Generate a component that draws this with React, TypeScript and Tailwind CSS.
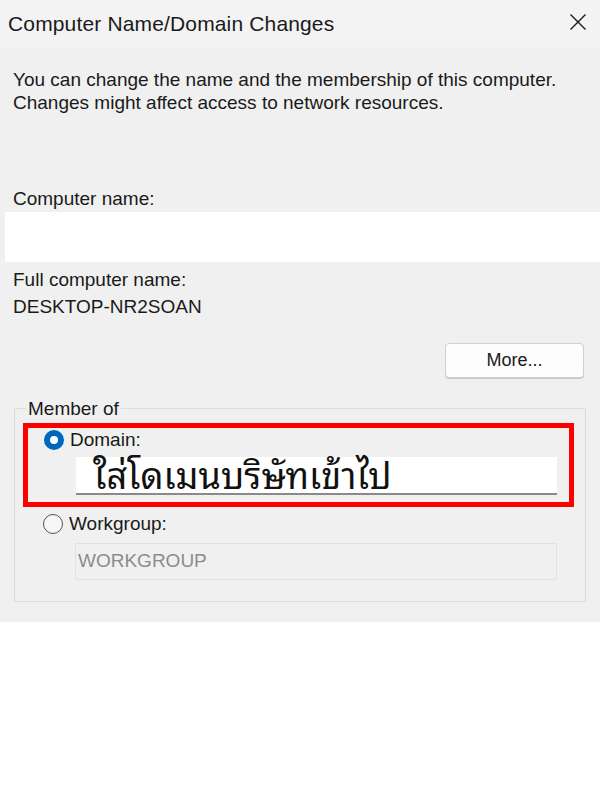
import React from "react";

export default function App() {
  const font = { fontFamily: '"Segoe UI", "Liberation Sans", Arial, sans-serif' };
  const thai = { fontFamily: '"Noto Sans Thai Looped", "Loma", "Garuda", "Tahoma", "Noto Sans Thai", "Noto Sans", sans-serif' };
  return (
    <div className="w-[600px] h-[800px] bg-white text-[#1a1a1a]" style={font}>
      <div className="bg-[#f0f0f0] h-[622px] flex flex-col">
        <div className="h-[48px] bg-[#f3f3f3] flex items-center justify-between pl-[8px] pr-[13px]">
          <span className="text-[21px] text-[#1a1a1a] tracking-[0.15px]">Computer Name/Domain Changes</span>
          <svg width="18" height="18" viewBox="0 0 18 18" className="mt-[-4px]">
            <path d="M1.5 1.5 L16.5 16.5 M16.5 1.5 L1.5 16.5" stroke="#1a1a1a" strokeWidth="1.4" fill="none" />
          </svg>
        </div>
        <div className="pl-[13px] pt-[20px] text-[19px] leading-[23px]">
          <p>You can change the name and the membership of this computer.</p>
          <p>Changes might affect access to network resources.</p>
        </div>
        <div className="pl-[13px] mt-[73px] text-[19px] leading-[23px]">Computer name:</div>
        <div className="ml-[5px] mt-[2px] h-[50px] bg-white"></div>
        <div className="pl-[13px] mt-[6px] text-[19px] leading-[23px]">Full computer name:</div>
        <div className="pl-[13px] mt-[4px] text-[19px] leading-[23px]">DESKTOP-NR2SOAN</div>
        <div className="flex justify-end pr-[16px] mt-[25px]">
          <button className="w-[139px] h-[35px] bg-[#fdfdfd] border border-[#d0d0d0] rounded-[4px] text-[18px] shadow-[0_1px_0_#c8c8c8]">More...</button>
        </div>
        <div className="relative mx-[14px] mt-[30px] h-[194px] border border-[#dcdcdc]">
          <span className="absolute left-[11px] top-[-12px] bg-[#f0f0f0] px-[2px] text-[19px] leading-[23px]">Member of</span>
          <div className="mt-[14px] ml-[8px] mr-[11px] h-[84px] border-[5px] border-[#ff0000] pt-[1px]">
            <div className="flex items-center gap-[6px] pl-[16px] h-[22px]">
              <span className="w-[20px] h-[20px] rounded-full bg-[#0067c0] flex items-center justify-center">
                <span className="w-[8px] h-[8px] rounded-full bg-white"></span>
              </span>
              <span className="text-[19px] leading-[22px]">Domain:</span>
            </div>
            <div className="ml-[48px] mr-[12px] mt-[6px] h-[38px] bg-white border-b-[2px] border-[#8a8a8a] flex items-center pl-[17px] overflow-visible">
              <span className="text-[36px] leading-[34px] text-[#111] mt-[-5px]" style={thai}>ใส่โดเมนบริษัทเข้าไป</span>
            </div>
          </div>
          <div className="flex items-center gap-[6px] pl-[28px] mt-[6px] h-[22px]">
            <span className="w-[20px] h-[20px] rounded-full border-[1.5px] border-[#555] bg-[#f6f6f6]"></span>
            <span className="text-[19px]">Workgroup:</span>
          </div>
          <div className="ml-[60px] mr-[28px] mt-[8px] h-[37px] border border-[#e2e2e2] flex items-center pl-[2px] text-[19px] text-[#8c8c8c]">WORKGROUP</div>
        </div>
      </div>
    </div>
  );
}
